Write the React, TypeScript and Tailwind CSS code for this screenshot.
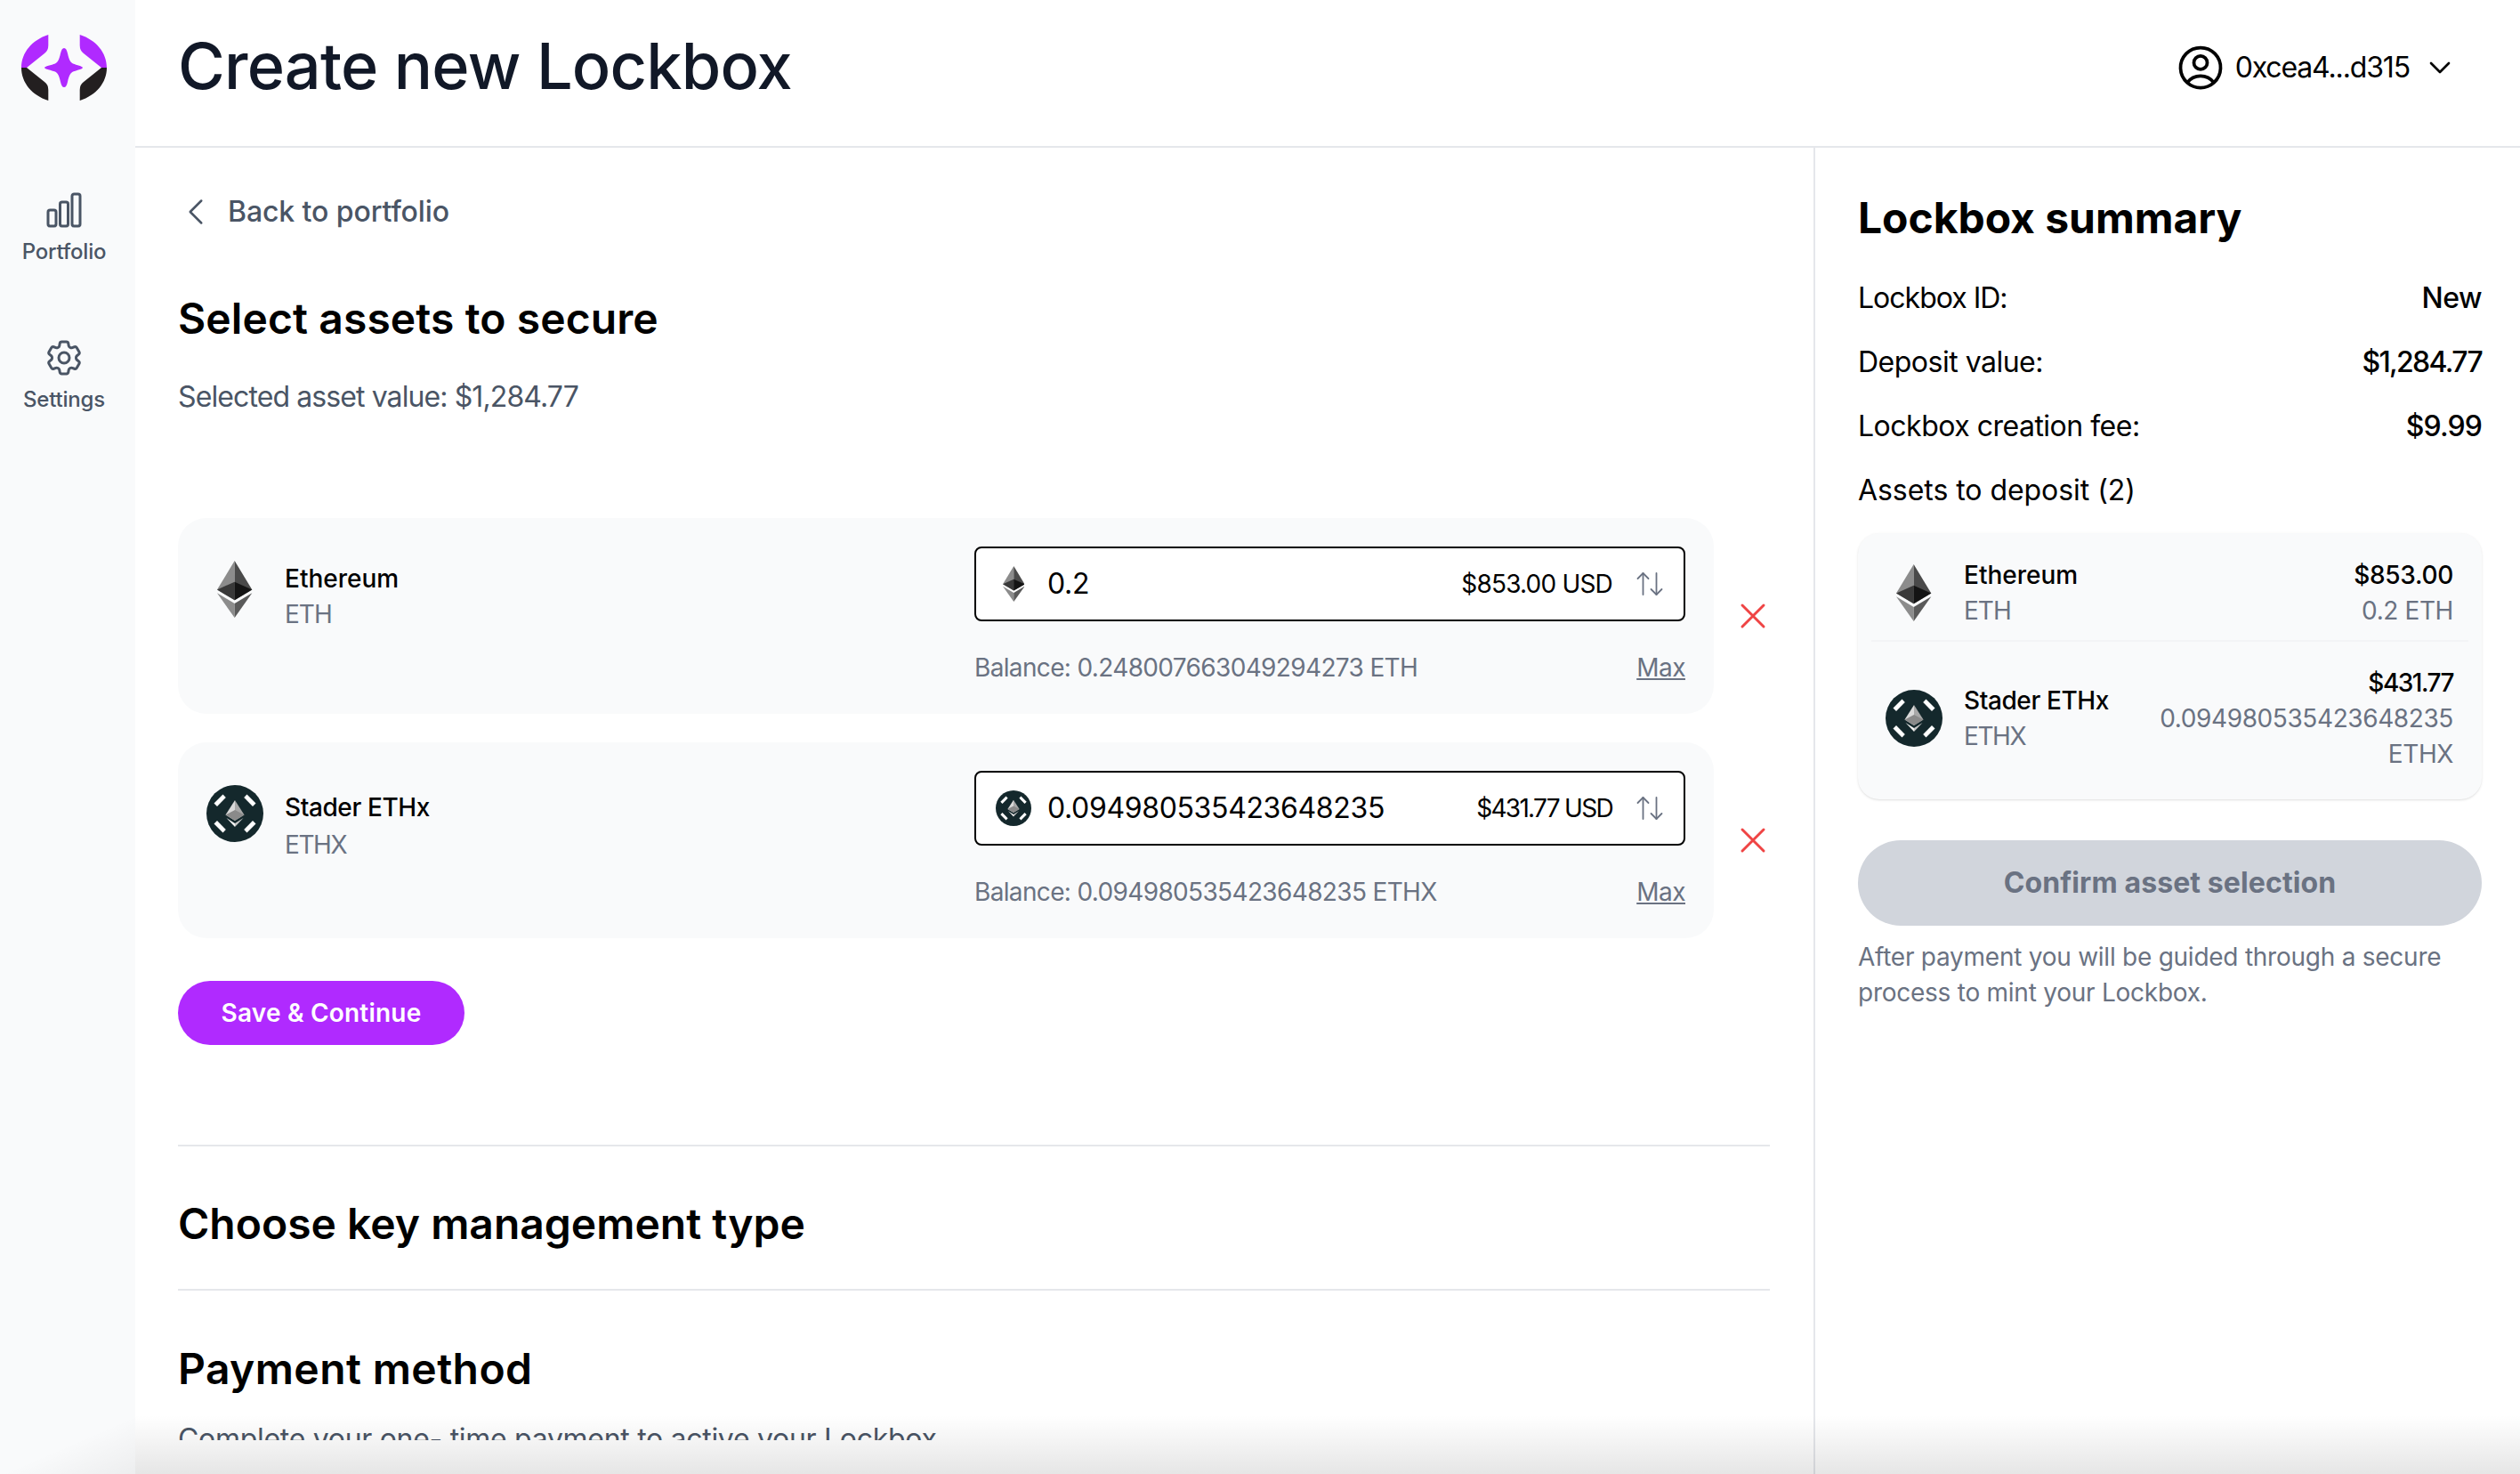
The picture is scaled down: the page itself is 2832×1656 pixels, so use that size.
import { ArrowUpDown, ChevronDown } from 'lucide-react'
import {
  HiOutlineChartBar,
  HiOutlineChevronLeft,
  HiOutlineCog6Tooth,
  HiOutlineUserCircle,
  HiOutlineXMark,
} from 'react-icons/hi2'

const assets = [
  {
    name: 'Ethereum',
    symbol: 'ETH',
    icon: 'eth',
    amount: '0.2',
    usd: '$853.00',
    balance: '0.248007663049294273',
    nameClass: 'tracking-[0px]',
    symbolClass: 'tracking-[-1px]',
    usdClass: 'tracking-[-0.8px]',
    priceClass: 'tracking-[-0.3px]',
    offsetClass: '',
    symbolOffsetClass: '',
  },
  {
    name: 'Stader ETHx',
    symbol: 'ETHX',
    icon: 'stader',
    amount: '0.094980535423648235',
    usd: '$431.77',
    balance: '0.094980535423648235',
    nameClass: 'tracking-[-0.4px]',
    symbolClass: 'tracking-[-1.4px]',
    usdClass: 'tracking-[-1.7px]',
    priceClass: 'tracking-[-1.5px]',
    offsetClass: 'mt-[5px]',
    symbolOffsetClass: 'mt-[2px]',
  },
]

function Logo() {
  const top = 'M30.3 0C12 6 0 20 0 37H6L26 21Q30.3 18 30.3 12Z'
  const bottom = 'M30.3 74C12 68 0 54 0 37H6L26 53Q30.3 56 30.3 62Z'
  return (
    <svg width="96" height="74" viewBox="0 0 96 74">
      <path d={top} fill="#b02aff" />
      <path d={top} fill="#b02aff" transform="matrix(-1 0 0 1 96 0)" />
      <path d={bottom} fill="#231f20" />
      <path d={bottom} fill="#231f20" transform="matrix(-1 0 0 1 96 0)" />
      <path
        d="M48 15C50 15 51 17 52 21C53.5 28 55 31 58 32.5C62 34 69 35.5 69 37C69 38.5 62 40 58 41.5C55 43 53.5 46 52 53C51 57 50 59 48 59C46 59 45 57 44 53C42.5 46 41 43 38 41.5C34 40 26 38.5 26 37C26 35.5 34 34 38 32.5C41 31 42.5 28 44 21C45 17 46 15 48 15Z"
        fill="#b02aff"
      />
    </svg>
  )
}

function EthGlyph({ height }: { height: number }) {
  return (
    <svg height={height} viewBox="0 0 256 417" preserveAspectRatio="xMidYMid meet">
      <path d="M128 0 0 212.3l128 75.7V0Z" fill="#8c8c8c" />
      <path d="M128 0l128 212.3L128 288V0Z" fill="#4a4a4a" />
      <path d="M128 154 0 212.3 128 288V154Z" fill="#393939" />
      <path d="M128 154l128 58.3L128 288V154Z" fill="#141414" />
      <path d="M128 417V312.2L0 236.6 128 417Z" fill="#8c8c8c" />
      <path d="M128 312.2V417l128-180.4-128 75.6Z" fill="#5a5a5a" />
    </svg>
  )
}

function StaderGlyph({ size }: { size: number }) {
  return (
    <svg width={size} height={size} viewBox="0 0 64 64">
      <circle cx="32" cy="32" r="32" fill="#14282c" />
      <g fill="#fff">
        <path d="M8.5 20.5 18.5 10.5 21.8 14 12 24Z" />
        <path d="M55.5 20.5 45.5 10.5 42.2 14 52 24Z" />
        <path d="M8.5 43.5 18.5 53.5 21.8 50 12 40Z" />
        <path d="M55.5 43.5 45.5 53.5 42.2 50 52 40Z" />
      </g>
      <path d="M32 17 21.5 33.5 32 40Z" fill="#d9d9d9" />
      <path d="M32 17 42.5 33.5 32 40Z" fill="#a8a8a8" />
      <path d="M32 28 21.5 33.5 32 40 42.5 33.5Z" fill="#8a8a8a" />
      <path d="M22.5 37 32 43V47Z" fill="#f2f2f2" />
      <path d="M41.5 37 32 43V47Z" fill="#c8c8c8" />
    </svg>
  )
}

function AssetIcon({ icon, eth, stader }: { icon: string; eth: number; stader: number }) {
  return icon === 'eth' ? <EthGlyph height={eth} /> : <StaderGlyph size={stader} />
}

function AssetRow({ asset }: { asset: (typeof assets)[number] }) {
  return (
    <div className="flex items-center gap-5">
      <div className="flex h-[220px] w-[1726px] shrink-0 justify-between rounded-[32px] bg-[#f9fafb] pr-8 pl-8">
        <div className="flex items-start gap-6 pt-12">
          <div className="flex h-16 w-16 items-center justify-center">
            <AssetIcon icon={asset.icon} eth={64} stader={64} />
          </div>
          <div>
            <p className={`text-[28px] leading-10 font-medium text-black ${asset.nameClass} ${asset.offsetClass}`}>
              {asset.name}
            </p>
            <p className={`text-[28px] leading-10 text-gray-500 ${asset.symbolClass} ${asset.symbolOffsetClass}`}>
              {asset.symbol}
            </p>
          </div>
        </div>

        <div className="w-[799px] pt-8">
          <div className="flex h-[84px] items-center rounded-[8px] border-2 border-black bg-white pr-5 pl-[22px]">
            <div className="flex h-10 w-10 items-center justify-center">
              <AssetIcon icon={asset.icon} eth={40} stader={40} />
            </div>
            <span className="ml-[18px] flex-1 text-[32px] leading-10 tracking-[-0.35px] text-black">
              {asset.amount}
            </span>
            <span className={`text-[28px] leading-10 text-black ${asset.usdClass}`}>{asset.usd} USD</span>
            <ArrowUpDown size={36} strokeWidth={1.2} className="ml-6 text-gray-500" />
          </div>
          <div className="mt-8 flex justify-between text-[28px] leading-10 tracking-[-0.65px] text-gray-500">
            <span>
              Balance: {asset.balance} {asset.symbol}
            </span>
            <span className="tracking-[-0.5px] underline">Max</span>
          </div>
        </div>
      </div>
      <HiOutlineXMark size={48} className="shrink-0 text-[#ef4444]" />
    </div>
  )
}

function SummaryRow({
  label,
  value,
  labelClass = 'tracking-[-0.5px]',
  valueClass = 'tracking-[-0.5px]',
}: {
  label: string
  value?: string
  labelClass?: string
  valueClass?: string
}) {
  return (
    <div className="flex justify-between text-[32px] leading-10 text-black">
      <span className={labelClass}>{label}</span>
      {value && <span className={`font-medium ${valueClass}`}>{value}</span>}
    </div>
  )
}

function SummaryAsset({ asset, className }: { asset: (typeof assets)[number]; className: string }) {
  return (
    <div className={`flex items-center justify-between pr-8 pl-[31px] ${className}`}>
      <div className="flex items-center gap-6">
        <div className="flex h-16 w-16 items-center justify-center">
          <AssetIcon icon={asset.icon} eth={64} stader={64} />
        </div>
        <div className="text-[28px] leading-10">
          <p className={`font-medium text-black ${asset.nameClass}`}>{asset.name}</p>
          <p className={`text-gray-500 ${asset.symbolClass}`}>{asset.symbol}</p>
        </div>
      </div>
      <div className="w-[340px] text-right text-[28px] leading-10 tracking-[-0.4px]">
        <p className={`font-medium text-black ${asset.priceClass}`}>{asset.usd}</p>
        <p className="text-gray-500">
          {asset.amount} {asset.symbol}
        </p>
      </div>
    </div>
  )
}

export default function App() {
  return (
    <div className="relative flex h-[1656px] w-[2832px] overflow-hidden bg-white font-['Inter',sans-serif]">
      {/* Sidebar */}
      <aside className="flex w-[152px] shrink-0 flex-col items-center bg-[#f9fafb] pt-[39px] pr-2 text-gray-600">
        <Logo />
        <div className="mt-[99px] flex flex-col items-center">
          <HiOutlineChartBar size={48} />
          <span className="mt-[7px] text-2xl leading-8 font-medium tracking-[-0.2px]">Portfolio</span>
        </div>
        <div className="mt-[79px] flex flex-col items-center">
          <HiOutlineCog6Tooth size={48} />
          <span className="mt-[7px] text-2xl leading-8 font-medium tracking-[-0.2px]">Settings</span>
        </div>
      </aside>

      <div className="flex min-w-0 flex-1 flex-col">
        {/* Header */}
        <header className="flex h-[166px] shrink-0 items-center justify-between border-b-2 border-gray-200 pr-[70px] pb-3 pl-12">
          <h1 className="mb-1 text-[72px] leading-20 font-medium tracking-[-0.8px] text-[#111827]">
            Create new Lockbox
          </h1>
          <div className="flex items-center text-black">
            <HiOutlineUserCircle size={60} />
            <span className="ml-[9px] text-[32px] leading-10 tracking-[-1.15px]">0xcea4...d315</span>
            <ChevronDown size={40} strokeWidth={1.6} className="ml-[14px]" />
          </div>
        </header>

        <div className="flex min-h-0 flex-1">
          {/* Create form */}
          <main className="h-[1452px] w-[1886px] shrink-0 overflow-hidden pr-[49px] pl-12">
            <div className="flex items-center gap-4 pt-[52px] text-gray-600">
              <HiOutlineChevronLeft size={40} />
              <span className="text-[32px] leading-10 font-medium tracking-[-0.1px]">Back to portfolio</span>
            </div>

            <h2 className="mt-[72px] text-5xl leading-14 font-semibold tracking-[0.1px] text-black">
              Select assets to secure
            </h2>
            <p className="mt-[36px] text-[32px] leading-12 tracking-[-0.9px] text-gray-600">
              Selected asset value: $1,284.77
            </p>

            <div className="mt-[112px] flex flex-col gap-8">
              {assets.map((asset) => (
                <AssetRow key={asset.symbol} asset={asset} />
              ))}
            </div>

            <button className="mt-12 h-[72px] w-[322px] rounded-full bg-[#b02aff] text-[28px] font-semibold tracking-[0.2px] text-white">
              Save &amp; Continue
            </button>

            <div className="mt-[112px] h-0.5 bg-gray-200" />
            <h2 className="mt-[59px] text-5xl leading-14 font-semibold tracking-[0px] text-black">
              Choose key management type
            </h2>
            <div className="mt-[45px] h-0.5 bg-gray-200" />
            <h2 className="mt-[60px] text-5xl leading-14 font-semibold tracking-[0.4px] text-black">
              Payment method
            </h2>
            <p className="mt-[27px] text-[32px] leading-12 tracking-[-0.3px] text-gray-600">
              Complete your one- time payment to active your Lockbox
            </p>
          </main>

          {/* Summary */}
          <aside className="flex-1 border-l-2 border-gray-200 pt-[51px] pr-[43px] pl-[48px]">
            <h2 className="text-5xl leading-14 font-bold tracking-[-0.05px] text-black">Lockbox summary</h2>
            <div className="mt-[42px] flex flex-col gap-8">
              <SummaryRow label="Lockbox ID:" value="New" labelClass="tracking-[-1px]" />
              <SummaryRow label="Deposit value:" value="$1,284.77" valueClass="tracking-[-1.7px]" />
              <SummaryRow label="Lockbox creation fee:" value="$9.99" valueClass="tracking-[-0.9px]" />
              <SummaryRow label="Assets to deposit (2)" labelClass="tracking-[-0.05px]" />
            </div>

            <div className="mt-7 rounded-3xl bg-[#f9fafb] shadow-sm">
              <SummaryAsset asset={assets[0]} className="pt-[27px] pb-[13px]" />
              <div className="mx-[15px] h-0.5 bg-gray-100" />
              <SummaryAsset asset={assets[1]} className="pt-[26px] pb-[31px]" />
            </div>

            <button className="mt-[46px] h-24 w-full rounded-full bg-gray-300 text-[32px] font-bold tracking-[0.1px] text-gray-500">
              Confirm asset selection
            </button>
            <p className="mt-[15px] text-[28px] leading-10 tracking-[-0.25px] text-gray-500">
              After payment you will be guided through a secure process to mint your Lockbox.
            </p>
          </aside>
        </div>
      </div>

      {/* Fade along the bottom edge of the window */}
      <div className="pointer-events-none absolute right-0 bottom-0 left-[152px] h-[66px] bg-gradient-to-b from-transparent to-black/10" />
      <div className="pointer-events-none absolute bottom-0 left-0 h-[66px] w-[152px] bg-gradient-to-br from-transparent via-transparent to-black/5" />
    </div>
  )
}
